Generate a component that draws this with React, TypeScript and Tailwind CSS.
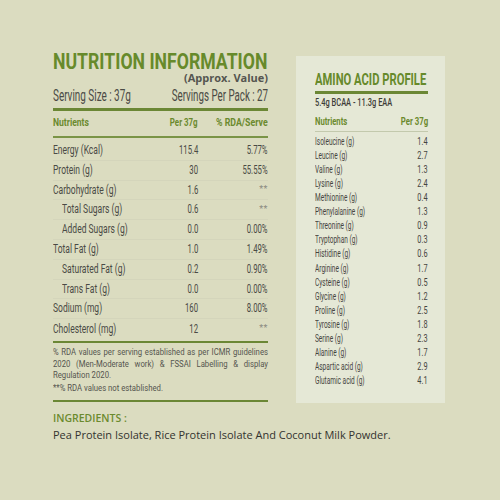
import React from "react";

const F = "font-['Roboto',sans-serif]";

const rows: [string, string, string, boolean][] = [
  ["Energy (Kcal)", "115.4", "5.77%", false],
  ["Protein (g)", "30", "55.55%", false],
  ["Carbohydrate (g)", "1.6", "**", false],
  ["Total Sugars (g)", "0.6", "**", true],
  ["Added Sugars (g)", "0.0", "0.00%", true],
  ["Total Fat (g)", "1.0", "1.49%", false],
  ["Saturated Fat (g)", "0.2", "0.90%", true],
  ["Trans Fat (g)", "0.0", "0.00%", true],
  ["Sodium (mg)", "160", "8.00%", false],
  ["Cholesterol (mg)", "12", "**", false],
];

const amino: [string, string][] = [
  ["Isoleucine (g)", "1.4"],
  ["Leucine (g)", "2.7"],
  ["Valine (g)", "1.3"],
  ["Lysine (g)", "2.4"],
  ["Methionine (g)", "0.4"],
  ["Phenylalanine (g)", "1.3"],
  ["Threonine (g)", "0.9"],
  ["Tryptophan (g)", "0.3"],
  ["Histidine (g)", "0.6"],
  ["Arginine (g)", "1.7"],
  ["Cysteine (g)", "0.5"],
  ["Glycine (g)", "1.2"],
  ["Proline (g)", "2.5"],
  ["Tyrosine (g)", "1.8"],
  ["Serine (g)", "2.3"],
  ["Alanine (g)", "1.7"],
  ["Aspartic acid (g)", "2.9"],
  ["Glutamic acid (g)", "4.1"],
];

export default function App() {
  return (
    <div className={`${F} w-[500px] h-[500px] bg-[#dbdcc0] overflow-hidden pl-[53px] pt-[50px]`}>
      <div className="flex items-start">
        {/* Left column */}
        <div className="w-[215px] flex flex-col">
          <div className="h-[23px] leading-[23px] text-[22.5px] font-bold text-[#678a2b] whitespace-nowrap">
            <span className="inline-block origin-left scale-x-[0.785]">NUTRITION INFORMATION</span>
          </div>
          <div className="h-[14px] leading-[14px] mt-[-2px] text-right font-['Open_Sans',sans-serif] font-bold text-[11px] text-[#555550]">
            (Approx. Value)
          </div>
          <div className="h-[17px] leading-[17px] mt-[2px] flex text-[16px] text-[#4a4a45] whitespace-nowrap">
            <div className="flex-1 min-w-0 flex justify-start">
              <span className="inline-block shrink-0 origin-left scale-x-[0.62]">Serving Size : 37g</span>
            </div>
            <div className="flex-1 min-w-0 flex justify-end">
              <span className="inline-block shrink-0 origin-right scale-x-[0.61]">Servings Per Pack : 27</span>
            </div>
          </div>
          <div className="h-[3px] mt-[4px] bg-[#6b8735]" />
          <div className="h-[25px] flex items-center text-[11px] font-bold text-[#6b8a2e] whitespace-nowrap">
            <div className="flex-1 min-w-0 flex">
              <span className="inline-block shrink-0 origin-left scale-x-[0.78]">Nutrients</span>
            </div>
            <div className="w-[50px] flex justify-end">
              <span className="inline-block shrink-0 origin-right scale-x-[0.72]">Per 37g</span>
            </div>
            <div className="w-[70px] flex justify-end">
              <span className="inline-block shrink-0 origin-right scale-x-[0.8]">% RDA/Serve</span>
            </div>
          </div>
          <div className="h-[2px] bg-[#7a9446]" />
          <div className="flex flex-col pt-[3px]">
            {rows.map(([n, v, r, ind], i) => (
              <div
                key={n}
                className={`h-[19.8px] flex items-center text-[12.5px] text-[#4a4a45] whitespace-nowrap ${i < rows.length - 1 ? "border-b border-[#d4d5bb]" : ""}`}
              >
                <div className={`flex-1 min-w-0 flex ${ind ? "pl-[9px]" : ""}`}>
                  <span className="inline-block shrink-0 origin-left scale-x-[0.68]">{n}</span>
                </div>
                <div className="w-[50px] flex justify-end">
                  <span className="inline-block shrink-0 origin-right scale-x-[0.62]">{v}</span>
                </div>
                <div className="w-[70px] flex justify-end">
                  {r === "**" ? (
                    <span className="inline-block text-[9px] text-[#8a8a80] tracking-[0.5px]">**</span>
                  ) : (
                    <span className="inline-block shrink-0 origin-right scale-x-[0.62]">{r}</span>
                  )}
                </div>
              </div>
            ))}
          </div>
          <div className="h-[2.5px] mt-[2px] bg-[#6b8735]" />
          <div className="mt-[4px] w-[250px] origin-left scale-x-[0.86] text-[9px] leading-[11.5px] text-[#55554f] text-justify">
            % RDA values per serving established as per ICMR guidelines 2020 (Men-Moderate work) &amp; FSSAI Labelling &amp; display Regulation 2020.
          </div>
          <div className="mt-[1.5px] w-[250px] origin-left scale-x-[0.86] text-[9px] leading-[11.5px] text-[#55554f] whitespace-nowrap">
            **% RDA values not established.
          </div>
          <div className="h-[2.5px] mt-[5px] bg-[#6b8735]" />
        </div>

        {/* Right panel */}
        <div className="ml-[28px] mt-[6px] w-[149px] h-[347px] bg-[#e5e8d6] pl-[19px] pr-[17px] pt-[14px] flex flex-col">
          <div className="h-[18px] leading-[18px] text-[17px] font-bold text-[#678a2b] whitespace-nowrap flex">
            <span className="inline-block shrink-0 origin-left scale-x-[0.66]">AMINO ACID PROFILE</span>
          </div>
          <div className="h-[2.5px] mt-[3px] bg-[#6b8735]" />
          <div className="h-[12px] leading-[12px] mt-[3px] text-[10px] font-medium text-[#3d3d38] whitespace-nowrap flex">
            <span className="inline-block shrink-0 origin-left scale-x-[0.745]">5.4g BCAA - 11.3g EAA</span>
          </div>
          <div className="h-[22px] pt-[4px] flex items-center text-[10px] font-bold text-[#6b8a2e] whitespace-nowrap">
            <div className="flex-1 min-w-0 flex">
              <span className="inline-block shrink-0 origin-left scale-x-[0.77]">Nutrients</span>
            </div>
            <div className="flex-1 min-w-0 flex justify-end">
              <span className="inline-block shrink-0 origin-right scale-x-[0.78]">Per 37g</span>
            </div>
          </div>
          <div className="h-px bg-[#c3c9ad]" />
          <div className="flex flex-col pt-[3.3px]">
            {amino.map(([n, v]) => (
              <div key={n} className="h-[14.07px] flex items-center text-[10.5px] text-[#45453f] whitespace-nowrap">
                <div className="flex-1 min-w-0 flex">
                  <span className="inline-block shrink-0 origin-left scale-x-[0.62]">{n}</span>
                </div>
                <div className="w-[30px] flex justify-end">
                  <span className="inline-block shrink-0 origin-right scale-x-[0.7]">{v}</span>
                </div>
              </div>
            ))}
          </div>
        </div>
      </div>

      <div className="mt-[9px] h-[13px] leading-[13px] font-['Open_Sans',sans-serif] font-semibold text-[10.5px] text-[#6b8a2e]">
        INGREDIENTS :
      </div>
      <div className="mt-[2.6px] h-[14px] leading-[14px] font-['Open_Sans',sans-serif] text-[11px] text-[#33332f] whitespace-nowrap">
        Pea Protein Isolate, Rice Protein Isolate And Coconut Milk Powder.
      </div>
    </div>
  );
}
